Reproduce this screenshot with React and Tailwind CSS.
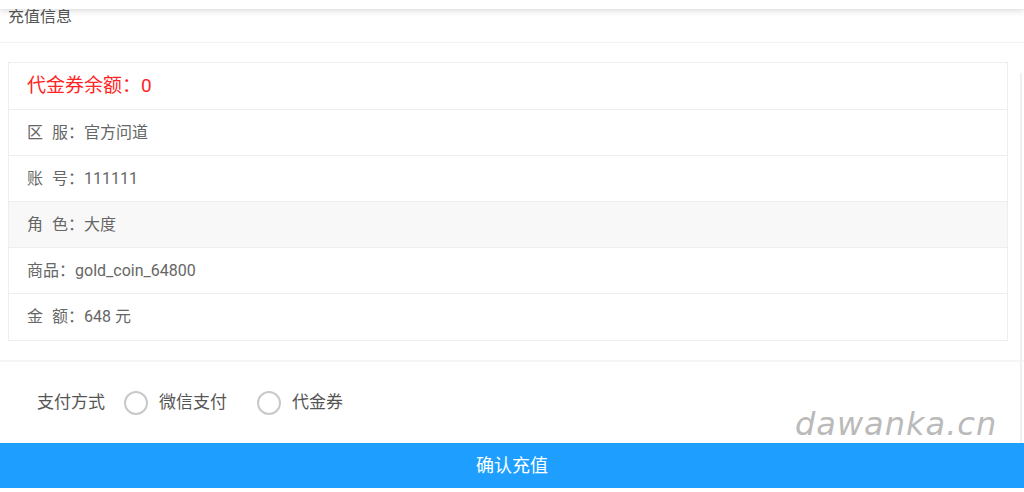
const font = '"Roboto", "Noto Sans CJK SC", "Liberation Sans", sans-serif';

const rows = [
  { label: ['区', '服'], value: '官方问道' },
  { label: ['账', '号'], value: '111111' },
  { label: ['角', '色'], value: '大度', shaded: true },
  { label: ['商品'], value: 'gold_coin_64800' },
  { label: ['金', '额'], value: '648 元' },
];

function Radio({ label }) {
  return (
    <label className="flex items-center gap-[11px] cursor-pointer">
      <span className="w-[24px] h-[24px] rounded-full border-2 border-[#c9c9c9] bg-white" />
      <span>{label}</span>
    </label>
  );
}

export default function App() {
  return (
    <div
      className="relative w-[1024px] h-[492px] bg-white overflow-hidden text-[#555]"
      style={{ fontFamily: font }}
    >
      {/* header bar, cut off at the top */}
      <div className="relative z-10 h-[9px] bg-white shadow-[0_2px_6px_rgba(0,0,0,0.14)]" />

      {/* title */}
      <div className="h-[34px] border-b border-[#f3f3f3] px-2 text-[16px] leading-[16px] text-[#555]">
        充值信息
      </div>

      {/* info card */}
      <div className="pt-[19px] pb-[19px] px-2">
        <div className="w-[1000px] border border-[#eeeeee]">
          <div className="h-[47px] flex items-center px-[18px] text-[19px] text-[#ff2424] border-b border-[#eeeeee]">
            代金券余额：0
          </div>
          {rows.map((r, i) => (
            <div
              key={i}
              className={`h-[46px] flex items-center px-[18px] text-[16px] text-[#666] ${
                i < rows.length - 1 ? 'border-b border-[#eeeeee]' : ''
              } ${r.shaded ? 'bg-[#f8f8f8]' : 'bg-white'}`}
            >
              <span className="flex items-center">
                {r.label.map((c, j) => (
                  <span key={j} className={j > 0 ? 'ml-[9px]' : ''}>{c}</span>
                ))}
                <span>：</span>
              </span>
              <span>{r.value}</span>
            </div>
          ))}
        </div>
      </div>

      {/* payment method */}
      <div className="border-t-2 border-[#f5f5f5] h-[83px] flex items-center pl-[37px] text-[17px] text-[#555]">
        <span className="mr-[19px]">支付方式</span>
        <div className="flex items-center gap-[30px]">
          <Radio label="微信支付" />
          <Radio label="代金券" />
        </div>
      </div>

      {/* watermark */}
      <div
        className="absolute left-[795px] top-[404px] text-[32px] leading-[40px] italic tracking-[1px] text-[#bababa]"
        style={{ fontFamily: '"DejaVu Sans", sans-serif' }}
      >
        dawanka.cn
      </div>

      {/* confirm button */}
      <button className="w-full h-[45px] bg-[#1e9fff] text-white text-[18px] flex items-center justify-center">
        确认充值
      </button>

      {/* faint scroll track on the right edge */}
      <div className="absolute right-[2px] top-[73px] h-[370px] w-[2px] bg-[#f0f0f0]" />
    </div>
  );
}
